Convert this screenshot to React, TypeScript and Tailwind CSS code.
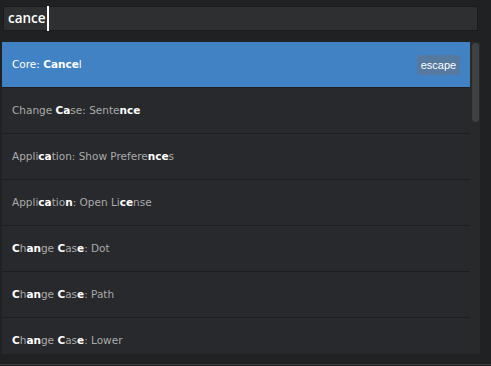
import React from 'react'

// ─── Types ───────────────────────────────────────────────────────────────────

type Part = { text: string; hit?: boolean }

interface Command {
  parts: Part[]
  keys?: string
}

// ─── Data ────────────────────────────────────────────────────────────────────

const COMMANDS: Command[] = [
  {
    parts: [{ text: 'Core: ' }, { text: 'Cance', hit: true }, { text: 'l' }],
    keys: 'escape',
  },
  {
    parts: [
      { text: 'Change ' },
      { text: 'Ca', hit: true },
      { text: 'se: Sente' },
      { text: 'nce', hit: true },
    ],
  },
  {
    parts: [
      { text: 'Appli' },
      { text: 'ca', hit: true },
      { text: 'tion: Show Prefere' },
      { text: 'nce', hit: true },
      { text: 's' },
    ],
  },
  {
    parts: [
      { text: 'Appli' },
      { text: 'ca', hit: true },
      { text: 'tio' },
      { text: 'n', hit: true },
      { text: ': Open Li' },
      { text: 'ce', hit: true },
      { text: 'nse' },
    ],
  },
  ...['Dot', 'Path', 'Lower'].map((name) => ({
    parts: [
      { text: 'C', hit: true },
      { text: 'h' },
      { text: 'an', hit: true },
      { text: 'ge ' },
      { text: 'C', hit: true },
      { text: 'as' },
      { text: 'e', hit: true },
      { text: `: ${name}` },
    ],
  })),
]

const FONT = "font-['DejaVu_Sans',sans-serif]"

// ─── Component ───────────────────────────────────────────────────────────────

export default function App() {
  return (
    <div className={`flex h-[366px] w-[491px] flex-col overflow-hidden bg-[#202123] ${FONT}`}>
      {/* search box */}
      <div className="ml-[3px] mt-[6px] flex h-[25px] w-[475px] items-center border border-[#1a1b1c] bg-[#2e2f31] pl-[4px]">
        <span className="font-['Open_Sans',sans-serif] text-[13.5px] font-semibold leading-none text-white">cance</span>
        <span className="ml-px h-[25px] w-[2px] bg-white" />
      </div>

      {/* results */}
      <div className="ml-[2px] mt-[11px] flex h-[312px] w-[478px]">
        <div className="flex w-[468px] flex-col overflow-hidden">
          {COMMANDS.map((cmd, i) => {
            const selected = i === 0
            return (
              <div
                key={i}
                className={`flex h-[46px] shrink-0 items-center justify-between border-b border-[#1d1e20] px-[10px] pt-px ${
                  selected ? 'bg-[#4182c4]' : 'bg-[#28292c]'
                }`}
              >
                <span className={`whitespace-pre text-[10.5px] ${selected ? 'text-white' : 'text-[#a9aaab]'}`}>
                  {cmd.parts.map((p, j) =>
                    p.hit ? (
                      <b key={j} className="font-bold text-white">
                        {p.text}
                      </b>
                    ) : (
                      <span key={j}>{p.text}</span>
                    ),
                  )}
                </span>
                {cmd.keys && (
                  <span className="flex h-[20px] w-[43px] items-center justify-center rounded-[3px] bg-[#55799f] font-['Liberation_Sans',sans-serif] text-[11px] text-white">
                    {cmd.keys}
                  </span>
                )}
              </div>
            )
          })}
        </div>

        {/* scrollbar */}
        <div className="w-[10px] bg-[#28292b] pl-[2px] pt-[1px]">
          <div className="h-[79px] w-[7px] rounded-full bg-[#3f4042]" />
        </div>
      </div>

      <div className="mt-[10px] h-px w-full bg-[#3a3b3e]" />
    </div>
  )
}
